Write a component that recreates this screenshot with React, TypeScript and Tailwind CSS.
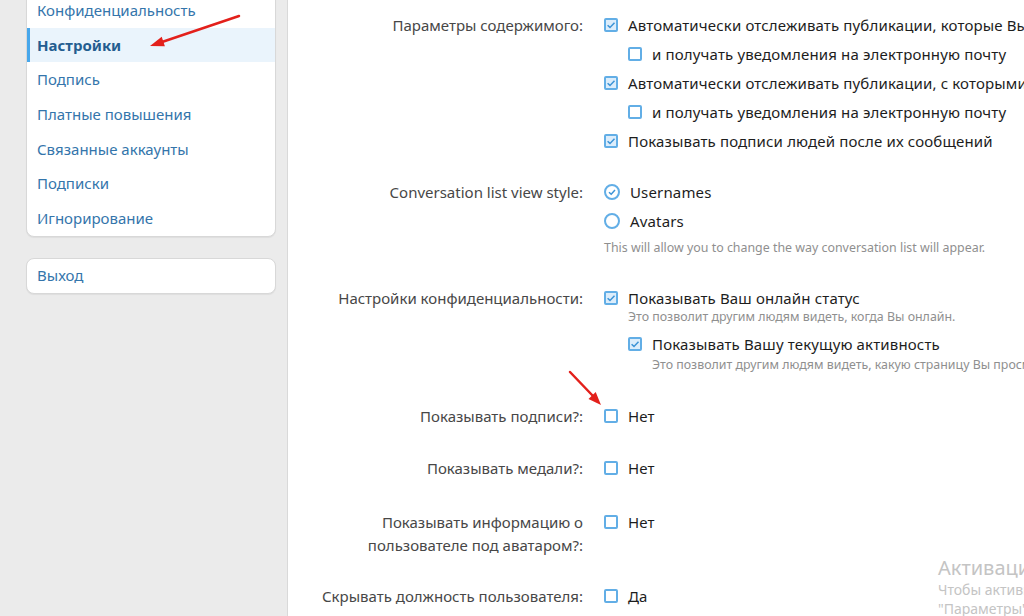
import { ReactNode } from 'react';

const navItems = [
	'Конфиденциальность',
	'Настройки',
	'Подпись',
	'Платные повышения',
	'Связанные аккаунты',
	'Подписки',
	'Игнорирование',
];

function Box({ checked }: { checked?: boolean }) {
	return (
		<span
			className={`inline-flex shrink-0 w-[14px] h-[14px] items-center justify-center border-2 border-[#62aee6] rounded-[2px] ${
				checked ? 'bg-[#dcedfb]' : 'bg-white'
			}`}
		>
			{checked && (
				<svg viewBox="0 0 10 10" className="w-[10px] h-[10px]">
					<path d="M1.6 5.2 L4 7.4 L8.5 2.7" fill="none" stroke="#3c93d6" strokeWidth="1.5" />
				</svg>
			)}
		</span>
	);
}

function Radio({ checked }: { checked?: boolean }) {
	return (
		<span className="inline-flex shrink-0 w-[16px] h-[16px] items-center justify-center border-2 border-[#62aee6] rounded-full bg-white">
			{checked && (
				<svg viewBox="0 0 10 10" className="w-[10px] h-[10px]">
					<path d="M2 5.2 L4.2 7.2 L8 3" fill="none" stroke="#3c93d6" strokeWidth="1.5" />
				</svg>
			)}
		</span>
	);
}

function Option({ checked, radio, sub, children }: { checked?: boolean; radio?: boolean; sub?: boolean; children: ReactNode }) {
	return (
		<div className={`flex items-center gap-[10px] h-[22px] text-[#1d1d1d] tracking-[0.15px] ${sub ? 'ml-[24px]' : ''}`}>
			{radio ? <Radio checked={checked} /> : <Box checked={checked} />}
			<span>{children}</span>
		</div>
	);
}

function Hint({ sub, className, children }: { sub?: boolean; className?: string; children: ReactNode }) {
	return (
		<div className={`text-[12.4px] leading-[16px] text-[#8f8f8f] ${sub ? 'ml-[48px]' : 'ml-[24px]'} ${className ?? ''}`}>
			{children}
		</div>
	);
}

function Row({ label, className, children }: { label: ReactNode; className?: string; children: ReactNode }) {
	return (
		<div className={`flex ${className ?? ''}`}>
			<div className="w-[295px] shrink-0 text-right text-[#474747] leading-[23px]">{label}</div>
			<div className="ml-[21px] flex flex-col whitespace-nowrap">{children}</div>
		</div>
	);
}

export default function App() {
	return (
		<div className="relative flex w-[1024px] h-[616px] overflow-hidden bg-white text-[15px] font-['Noto_Sans',sans-serif]">
			<aside className="w-[288px] shrink-0 bg-[#ebebeb] border-r border-[#d9d9d9] pl-[26px] pr-[11px]">
				<nav className="mt-[-8px] bg-white border border-[#d8d8d8] rounded-[8px] overflow-hidden shadow-[0_1px_1px_rgba(0,0,0,0.06)]">
					{navItems.map((item) => {
						const active = item === 'Настройки';
						return (
							<div
								key={item}
								className={`h-[34.67px] flex items-center pl-[7px] border-l-[3px] ${
									active ? 'border-[#47a7eb] bg-[#eaf4fc] font-bold text-[#245d90]' : 'border-transparent text-[#3475ab]'
								}`}
							>
								{item}
							</div>
						);
					})}
				</nav>
				<div className="mt-[21px] h-[36px] flex items-center pl-[10px] bg-white border border-[#d8d8d8] rounded-[8px] text-[#3475ab] shadow-[0_1px_1px_rgba(0,0,0,0.06)]">
					Выход
				</div>
			</aside>

			<main className="flex-1 pt-[14px]">
				<Row label="Параметры содержимого:">
					<div className="flex flex-col gap-[7px]">
						<Option checked>Автоматически отслеживать публикации, которые Вы создаёте</Option>
						<Option sub>и получать уведомления на электронную почту</Option>
						<Option checked>Автоматически отслеживать публикации, с которыми Вы взаимодействуете</Option>
						<Option sub>и получать уведомления на электронную почту</Option>
						<Option checked>Показывать подписи людей после их сообщений</Option>
					</div>
				</Row>

				<Row label="Conversation list view style:" className="mt-[29px]">
					<div className="flex flex-col gap-[7px]">
						<Option radio checked>Usernames</Option>
						<Option radio>Avatars</Option>
					</div>
					<div className="mt-[8px] text-[12.4px] leading-[16px] text-[#8f8f8f]">
						This will allow you to change the way conversation list will appear.
					</div>
				</Row>

				<Row label="Настройки конфиденциальности:" className="mt-[31px]">
					<Option checked>Показывать Ваш онлайн статус</Option>
					<Hint>Это позволит другим людям видеть, когда Вы онлайн.</Hint>
					<div className="mt-[8px]">
						<Option checked sub>Показывать Вашу текущую активность</Option>
					</div>
					<Hint sub className="mt-[2px]">
						Это позволит другим людям видеть, какую страницу Вы просматриваете в данный момент.
					</Hint>
				</Row>

				<Row label="Показывать подписи?:" className="mt-[32px]">
					<Option>Нет</Option>
				</Row>

				<Row label="Показывать медали?:" className="mt-[29px]">
					<Option>Нет</Option>
				</Row>

				<Row
					label={
						<>
							Показывать информацию о
							<br />
							пользователе под аватаром?:
						</>
					}
					className="mt-[31px]"
				>
					<Option>Нет</Option>
				</Row>

				<Row label="Скрывать должность пользователя:" className="mt-[28px]">
					<Option>Да</Option>
				</Row>
			</main>

			{/* annotation arrows */}
			<svg className="absolute inset-0 pointer-events-none" width="1024" height="616">
				<line x1="239" y1="16" x2="162" y2="42" stroke="#e3201b" strokeWidth="2.5" strokeLinecap="round" />
				<polygon points="150,46 164.9,46.2 161.7,36.8" fill="#e3201b" />
				<line x1="570" y1="372" x2="593" y2="396" stroke="#e3201b" strokeWidth="2.5" strokeLinecap="round" />
				<polygon points="601,405 588.5,398.9 595.7,392.1" fill="#e3201b" />
			</svg>

			{/* windows activation watermark */}
			<div className="absolute left-[938px] top-[555px] whitespace-nowrap text-[#c4c4c4] pointer-events-none">
				<div className="text-[20px] leading-[25px]">Активация Windows</div>
				<div className="text-[14px] leading-[19px]">Чтобы активировать Windows, перейдите в раздел</div>
				<div className="text-[14px] leading-[19px]">"Параметры".</div>
			</div>
		</div>
	);
}
